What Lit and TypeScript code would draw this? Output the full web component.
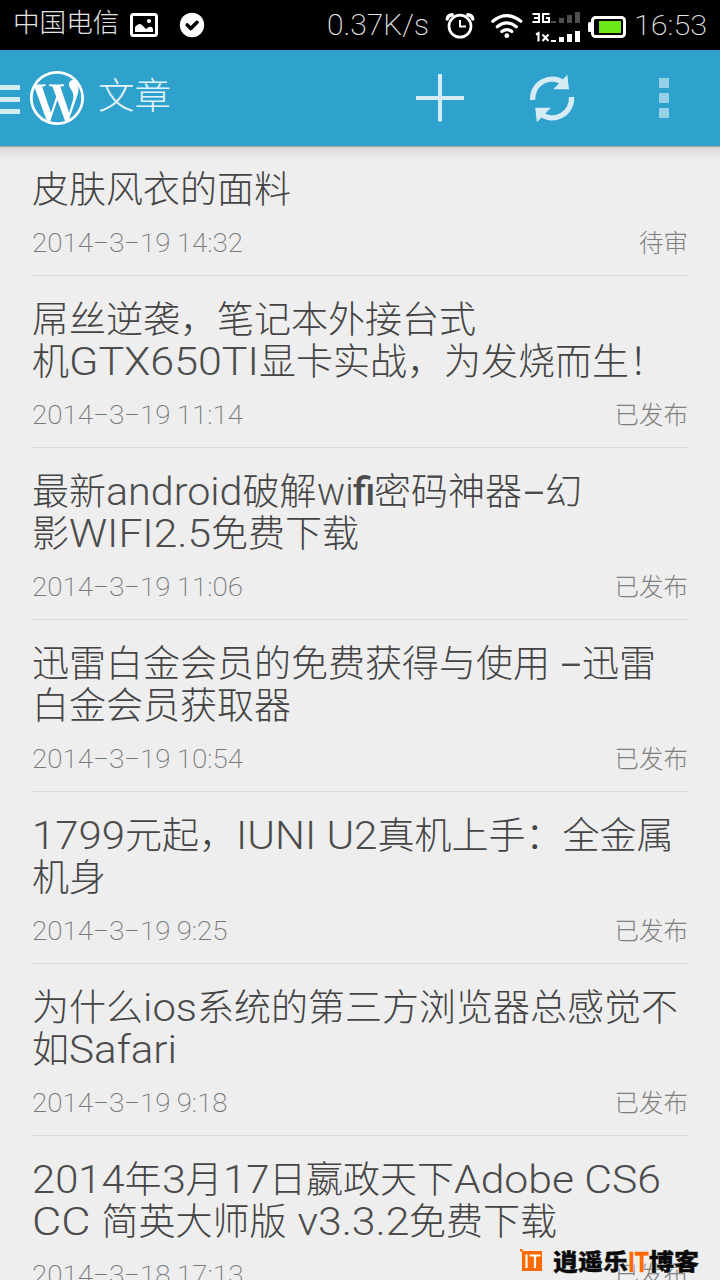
import { LitElement, html, svg, css } from "lit";
import { customElement, property } from "lit/decorators.js";

type Run = [text: string, width?: number, kind?: string];
type Post = { lines: Run[][]; date: Run[]; status: string };

const day = (d: string, time: string, w: number): Run[] => [
  ["2014", 61], ["-", 15.5, "dash"], ["3", 15.5], ["-", 15.5, "dash"], [d, 30.5], [" " + time, w],
];

const posts: Post[] = [
  { lines: [[["皮肤风衣的面料"]]], date: day("19", "14:32", 73), status: "待审" },
  {
    lines: [[["屌丝逆袭，笔记本外接台式"]], [["机"], ["GTX650TI", 190], ["显卡实战，为发烧而生！"]]],
    date: day("19", "11:14", 73), status: "已发布",
  },
  {
    lines: [
      [["最新"], ["android", 136.5], ["破解"], ["wi", 36.5], ["fi", 21, "heavy"], ["密码神器"], ["-", 23, "dash"], ["幻"]],
      [["影"], ["WIFI2.5", 142], ["免费下载"]],
    ],
    date: day("19", "11:06", 73), status: "已发布",
  },
  {
    lines: [[["迅雷白金会员的免费获得与使用"], [" ", 9], ["-", 23, "dash"], ["迅雷"]], [["白金会员获取器"]]],
    date: day("19", "10:54", 73), status: "已发布",
  },
  {
    lines: [[["1799", 93], ["元起，"], ["IUNI U2", 141.5], ["真机上手：全金属"]], [["机身"]]],
    date: day("19", "9:25", 57.5), status: "已发布",
  },
  {
    lines: [[["为什么"], ["ios", 54], ["系统的第三方浏览器总感觉不"]], [["如"], ["Safari", 108]]],
    date: day("19", "9:18", 57.5), status: "已发布",
  },
  {
    lines: [
      [["2014", 92.5], ["年"], ["3", 24], ["月"], ["17", 46.5], ["日嬴政天下"], ["Adobe CS6", 207]],
      [["CC ", 69.5], ["简英大师版"], [" v3.3.2", 122.5], ["免费下载"]],
    ],
    date: day("18", "17:13", 73.5), status: "已发布",
  },
];

/** A stretch of text condensed or expanded to fill a given advance width. */
@customElement("fit-run")
class FitRun extends LitElement {
  @property() text = "";
  @property({ type: Number }) width = 0;
  @property() kind = "";

  static styles = css`
    :host { display: inline-block; white-space: pre; }
    .t { display: inline-block; white-space: pre; transform-origin: 0 50%; }
    .heavy { font-weight: 500; font-size: 38px; }
    .dash { font-family: "Inter", sans-serif; transform-origin: 50% 50%; }
  `;

  protected updated() {
    const t = this.renderRoot.querySelector(".t") as HTMLElement;
    if (!this.width) return;
    this.style.width = `${this.width}px`;
    const natural = t.getBoundingClientRect().width;
    if (this.kind === "dash") {
      t.style.marginLeft = `${(this.width - natural) / 2}px`;
      t.style.transform = `translateY(-1px) scaleX(${(this.width / natural) * 1.15})`;
    } else if (this.kind !== "heavy") {
      t.style.transform = `scaleX(${this.width / natural})`;
    }
  }

  render() {
    return html`<span class="t ${this.kind}">${this.text}</span>`;
  }
}

const runs = (list: Run[]) =>
  list.map(([t, w, k]) =>
    w ? html`<fit-run class="latin" .text=${t} .width=${w} .kind=${k ?? ""}></fit-run>` : html`<span class="han">${t}</span>`,
  );

@customElement("post-row")
class PostRow extends LitElement {
  @property({ attribute: false }) post!: Post;

  static styles = css`
    :host { display: block; margin: 0 32px; padding: 22px 0 17px; border-bottom: 1px solid #dadada; }
    .line { display: flex; height: 42px; line-height: 44px; font-size: 37px; color: #444; white-space: pre; font-weight: 200; }
    .line .latin { font-size: 39.5px; font-weight: 300; color: #4c4c4c; }
    .han { line-height: 46px; }
    .meta { display: flex; justify-content: space-between; height: 30px; line-height: 30px; margin-top: 18px; font-weight: 200; }
    .date { display: flex; font-size: 26px; color: #787878; }
    .status { font-size: 24.5px; line-height: 32px; color: #808080; }
  `;

  render() {
    const { lines, date, status } = this.post;
    return html`
      ${lines.map((l) => html`<div class="line">${runs(l)}</div>`)}
      <div class="meta"><div class="date">${runs(date)}</div><div class="status">${status}</div></div>
    `;
  }
}

const bars = (y: number, fill: string) =>
  [2, 5, 8, 11].map((h, i) => svg`<rect x=${19 + i * 8} y=${y - h} width="5" height=${h} fill=${fill} />`);

@customElement("app-root")
class AppRoot extends LitElement {
  static styles = css`
    :host { display: block; position: relative; width: 720px; height: 1280px; overflow: hidden; background: #eee;
      font-family: "Roboto", "Noto Sans CJK SC", sans-serif; font-kerning: normal; }
    svg { display: block; flex: none; }
    .status { display: flex; height: 50px; background: #000; color: #e4e4e4; font-weight: 200; box-sizing: border-box; padding-left: 13px; }
    .carrier { width: 117px; font-size: 26.6px; line-height: 46px; }
    .rate { margin-left: 133px; width: 118px; font-size: 29px; line-height: 51px; }
    .clock { font-size: 28.5px; line-height: 52px; margin-left: 5px; }
    .bar { display: flex; height: 96px; background: #2ea1cd; }
    .title { width: 300px; margin-left: 13px; font-size: 36.5px; line-height: 94px; font-weight: 200; color: #e2f2f9; }
    .list { box-shadow: inset 0 1px #a5a5a5; background: linear-gradient(#cfcfcf, #e2e2e2 5px, #eee 15px); height: 1134px; overflow: hidden; }
    .mark { position: absolute; left: 519px; top: 1247px; display: flex; color: #0a0a0a; font-weight: 900; font-size: 23px; line-height: 31px;
      text-shadow: 0 0 2px #fff, 0 0 1px #fff; }
    .words { display: flex; margin-left: 10px; -webkit-text-stroke: 0.4px currentColor; }
    .orange { color: #ff6a00; font-size: 27.5px; font-weight: 700; }
  `;

  render() {
    return html`
      <div class="status">
        <div class="carrier">中国电信</div>
        <svg width="64" height="50" viewBox="130 0 64 50" overflow="visible">
          <rect x="131.5" y="14.5" width="25" height="21" rx="2" fill="none" stroke="#fff" stroke-width="3" />
          <circle cx="149" cy="21" r="2" fill="#fff" />
          <path d="M135 32v-5q4-5 7-2l4 4 3-2q3-1 4 2v3z" fill="#fff" />
          <circle cx="192" cy="25" r="12.2" fill="#fff" />
          <path d="M187.2 25l3.6 3.5 6.2-6.2" fill="none" stroke="#000" stroke-width="3.6" stroke-linecap="round" stroke-linejoin="round" />
        </svg>
        <div class="rate"><fit-run .text=${"0.37K/s"} .width=${102}></fit-run></div>
        <svg width="184" height="50" viewBox="445 0 184 50">
          <g fill="none" stroke="#fff">
            <circle cx="460" cy="26.2" r="11" stroke-width="2.7" />
            <path d="M460 20v6.5h6" stroke-width="2" />
            <path d="M447.2 19q.8-4 5-4.3M472.8 19q-.8-4-5-4.3" stroke-width="3.4" stroke-linecap="round" />
            <g stroke-width="3.2" stroke-linecap="round">
              <path d="M492.8 21.3q14-11.2 28 0M497.3 26.7q9.5-7.6 19 0M501.8 31.6q5-4 10 0" />
            </g>
          </g>
          <circle cx="506.8" cy="35.7" r="2.4" fill="#fff" />
          <g fill="none" stroke="#fff" stroke-width="2.1">
            <path d="M532.5 14h6.5v8h-6.5M534 18h5M549.5 14h-6.5v8h6v-4h-3" />
            <path d="M536 34.5l2.5-1.5v8.5M542.5 34.5l6 6.5M548.5 34.5l-6 6.5" />
          </g>
          <g transform="translate(532 0)">${bars(23, "#505050")}${bars(42, "#fff")}</g>
          <rect x="592.5" y="17.5" width="32" height="19" rx="3" fill="none" stroke="#fff" stroke-width="3" />
          <rect x="588" y="22" width="4" height="10" rx="1.5" fill="#fff" />
          <rect x="599" y="21" width="22" height="12" fill="#6be619" />
        </svg>
        <div class="clock"><fit-run .text=${"16:53"} .width=${73}></fit-run></div>
      </div>

      <div class="bar">
        <svg width="85" height="96" viewBox="0 50 85 96">
          <path d="M0 85h20v5H0zM0 97h20v5H0zM0 109h20v5H0z" fill="#d5ecf5" />
          <path transform="translate(30 71) scale(2.25)" fill="#fff" fill-rule="evenodd" d="M21.469 6.825c.84 1.537 1.318 3.3 1.318 5.175 0 3.979-2.156 7.456-5.363 9.325l3.295-9.527c.615-1.54.82-2.771.82-3.864 0-.405-.026-.78-.07-1.11m-7.981.105c.647-.03 1.232-.105 1.232-.105.582-.075.514-.93-.067-.899 0 0-1.755.135-2.88.135-1.064 0-2.85-.15-2.85-.15-.585-.03-.661.855-.075.885 0 0 .54.061 1.125.09l1.68 4.605-2.37 7.08L5.354 6.9c.649-.03 1.234-.1 1.234-.1.585-.075.516-.93-.065-.896 0 0-1.746.138-2.874.138-.2 0-.438-.008-.69-.015C4.911 3.15 8.235 1.215 12 1.215c2.809 0 5.365 1.072 7.286 2.833-.046-.003-.091-.009-.141-.009-1.06 0-1.812.923-1.812 1.914 0 .89.513 1.643 1.06 2.531.411.72.89 1.643.89 2.977 0 .915-.354 1.994-.821 3.479l-1.075 3.585-3.9-11.61.001.014zM12 22.784c-1.059 0-2.081-.153-3.048-.437l3.237-9.406 3.315 9.087c.024.053.05.101.078.149-1.12.393-2.325.609-3.582.609M1.211 12c0-1.564.336-3.05.935-4.39L7.29 21.709C3.694 19.96 1.212 16.271 1.211 12M12 0C5.385 0 0 5.385 0 12s5.385 12 12 12 12-5.385 12-12S18.615 0 12 0" />
        </svg>
        <div class="title">文章</div>
        <svg width="300" height="96" viewBox="398 50 300 96">
          <path d="M416 96h22V74h4v22h22v4h-22v21.5h-4V100h-22z" fill="#d5ecf5" />
          <g>
            <path d="M532.7 100a19.4 19.4 0 0 1 31-17" fill="none" stroke="#d5ecf5" stroke-width="5.3" />
            <path d="M567.3 74.7L569 89.2H553.3z" fill="#d5ecf5" />
          </g>
          <g transform="rotate(180 552.1 98.5)">
            <path d="M532.7 100a19.4 19.4 0 0 1 31-17" fill="none" stroke="#d5ecf5" stroke-width="5.3" />
            <path d="M567.3 74.7L569 89.2H553.3z" fill="#d5ecf5" />
          </g>
          <path d="M659 78h10v10h-10zM659 93h10v10h-10zM659 108h10v10h-10z" fill="#98d0e7" />
        </svg>
      </div>

      <div class="list">${posts.map((p) => html`<post-row .post=${p}></post-row>`)}</div>

      <div class="mark">
        <svg width="24" height="26" viewBox="519 1247 24 26">
          <path d="M520 1249h2.5v2.5H520zM522 1251h20v20h-20z" fill="#ff6a00" />
          <path d="M526.5 1254.5v13.5M529.5 1255.5h11M535 1255v13" fill="none" stroke="#fff" stroke-width="2.2" />
        </svg>
        <div class="words">
          <fit-run .text=${"逍遥乐"} .width=${75}></fit-run><fit-run class="orange" .text=${"IT"} .width=${21}></fit-run><fit-run .text=${"博客"} .width=${50}></fit-run>
        </div>
      </div>
    `;
  }
}
